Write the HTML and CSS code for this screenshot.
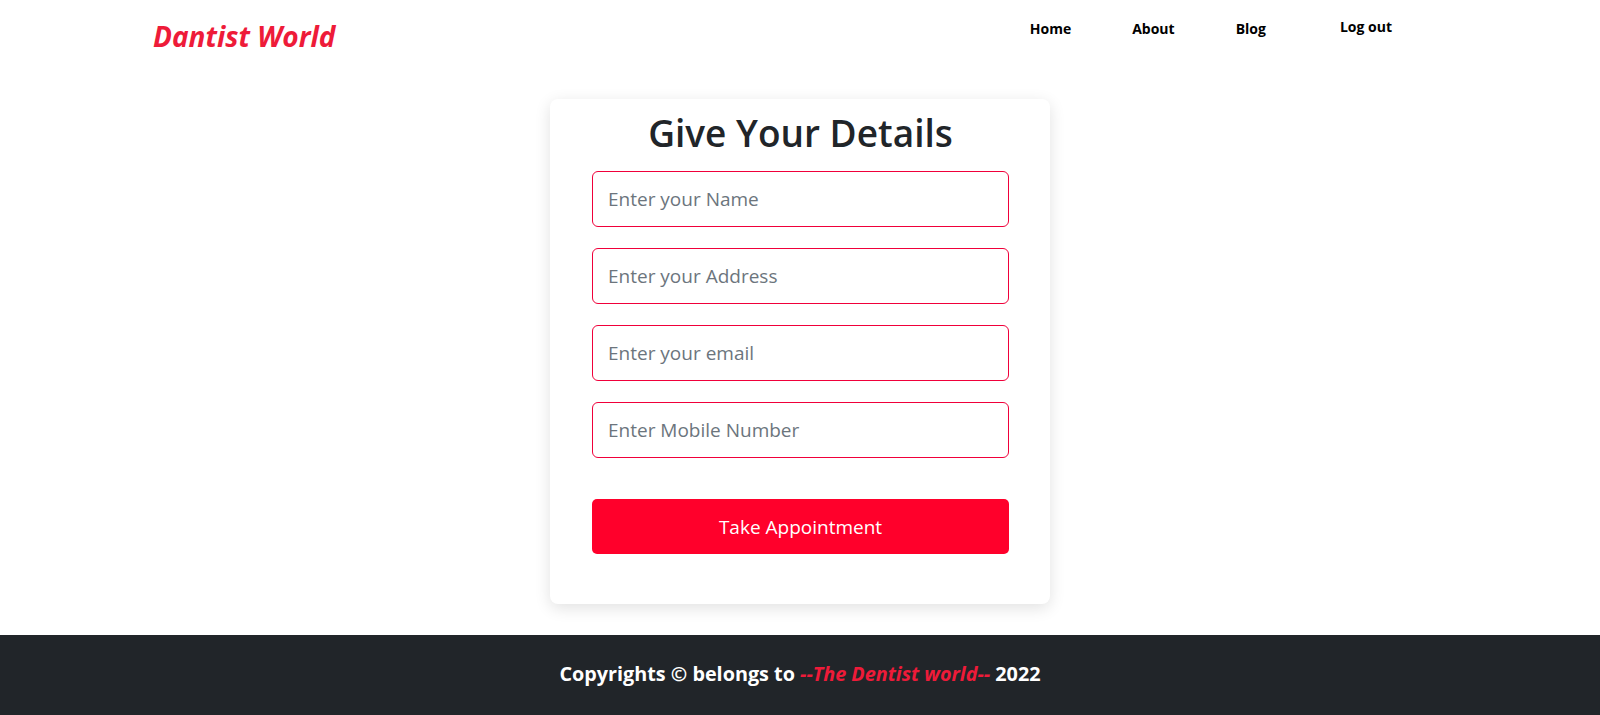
FILE: index.html
```
<!DOCTYPE html>
<html lang="en">
<head>
    <meta charset="UTF-8">
    <meta name="viewport" content="width=device-width, initial-scale=1.0">
    <title>Dantist World</title>
    <link rel="stylesheet" href="styles.css">
</head>
<body>
    <header class="topbar">
        <a class="brand" href="#">Dantist World</a>
        <nav class="menu">
            <a href="#">Home</a>
            <a href="#">About</a>
            <a href="#">Blog</a>
            <button class="logout">Log out</button>
        </nav>
    </header>

    <main class="page">
        <form class="details">
            <h1>Give Your Details</h1>
            <input type="text" placeholder="Enter your Name">
            <input type="text" placeholder="Enter your Address">
            <input type="email" placeholder="Enter your email">
            <input type="text" placeholder="Enter Mobile Number">
            <button type="button" class="take">Take Appointment</button>
        </form>
    </main>

    <footer class="foot">
        <p>Copyrights © belongs to <em>--The Dentist world--</em> 2022</p>
    </footer>
</body>
</html>
```
FILE: styles.css
```
*{
    box-sizing: border-box;
}
body{
    margin: 0;
    padding: 0;
    font-family: "Open Sans", "Noto Sans", sans-serif;
    color: #212529;
    background-color: #fff;
}
.topbar{
    display: flex;
    align-items: center;
    justify-content: space-between;
    height: 70px;
    padding: 0 208px 0 153px;
}
.brand{
    color: #ee1b39;
    font-size: 28px;
    font-weight: bold;
    font-style: italic;
    text-decoration: none;
    margin-top: 1px;
}
.menu{
    display: flex;
    align-items: center;
    align-self: flex-start;
    padding-top: 17px;
}
.menu a{
    color: #000;
    text-decoration: none;
    font-size: 14px;
    font-weight: bold;
    margin-left: 61px;
}
.menu a:first-child{
    margin-left: 0;
}
.logout{
    background: none;
    border: none;
    padding: 0;
    margin-left: 74px;
    margin-bottom: 4px;
    font-family: inherit;
    font-size: 14px;
    font-weight: bold;
    color: #000;
}
.page{
    display: flex;
    justify-content: center;
    padding-top: 29px;
}
.details{
    width: 500px;
    background-color: #fff;
    border-radius: 8px;
    box-shadow: 0 4px 16px rgba(0,0,0,.12);
    padding: 12px 41px 50px 42px;
    display: flex;
    flex-direction: column;
}
.details h1{
    margin: 0 0 16px;
    text-align: center;
    font-size: 37px;
    font-weight: 600;
    line-height: 1.2;
}
.details input{
    height: 56px;
    margin-bottom: 21px;
    padding: 0 15px;
    border: 1px solid #f0003a;
    border-radius: 6px;
    font-family: inherit;
    font-size: 19px;
    color: #212529;
}
.details input::placeholder{
    color: #6c757d;
}
.take{
    margin-top: 20px;
    height: 55px;
    border: none;
    border-radius: 5px;
    background-color: #ff002b;
    color: #fff;
    font-family: inherit;
    font-size: 19px;
}
.take:hover{
    opacity: .9;
}
.foot{
    margin-top: 31px;
    background-color: #212529;
    color: #fff;
    height: 82px;
    padding-bottom: 6px;
    display: flex;
    align-items: center;
    justify-content: center;
}
.foot p{
    margin: 0;
    font-size: 19.8px;
    font-weight: bold;
}
.foot em{
    color: #ee1b39;
}
```
